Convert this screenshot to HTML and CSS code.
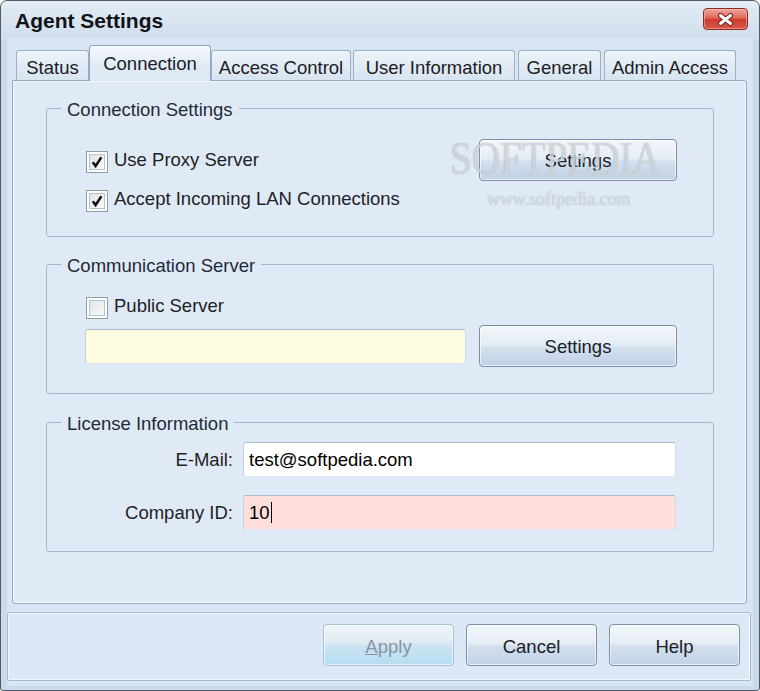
FILE: index.html
```html
<!DOCTYPE html>
<html lang="en">
<head>
<meta charset="utf-8">
<title>Agent Settings</title>
<link rel="stylesheet" href="styles.css">
</head>
<body>
<div class="window">
  <div class="titlebar">
    <span class="title">Agent Settings</span>
    <span class="close" aria-label="Close">
      <svg width="17" height="13" viewBox="0 0 17 13"><path d="M3.5 2.5 L13.5 10.5 M13.5 2.5 L3.5 10.5" stroke="#7a2118" stroke-width="5" stroke-linecap="round" fill="none"/><path d="M3.5 2.5 L13.5 10.5 M13.5 2.5 L3.5 10.5" stroke="#ffffff" stroke-width="3" stroke-linecap="round" fill="none"/></svg>
    </span>
  </div>
  <div class="client">
    <div class="tabs">
      <div class="tab tab-status">Status</div>
      <div class="tab tab-connection active">Connection</div>
      <div class="tab tab-access">Access Control</div>
      <div class="tab tab-user">User Information</div>
      <div class="tab tab-general">General</div>
      <div class="tab tab-admin">Admin Access</div>
    </div>
    <div class="panel">
      <fieldset class="group">
        <legend>Connection Settings</legend>
        <div class="group-body body-connection">
          <div class="checks">
            <div class="check"><span class="box"><svg width="16" height="16" viewBox="0 0 16 16"><path d="M3.2 8.2 L6.4 12.6 L13 2.6" stroke="#111" stroke-width="2.8" fill="none" stroke-linejoin="miter"/></svg></span>Use Proxy Server</div>
            <div class="check"><span class="box"><svg width="16" height="16" viewBox="0 0 16 16"><path d="M3.2 8.2 L6.4 12.6 L13 2.6" stroke="#111" stroke-width="2.8" fill="none" stroke-linejoin="miter"/></svg></span>Accept Incoming LAN Connections</div>
          </div>
          <div class="btn btn-wide">Settings</div>
        </div>
      </fieldset>
      <fieldset class="group group-gap">
        <legend>Communication Server</legend>
        <div class="group-body body-comm">
          <div class="check"><span class="box"></span>Public Server</div>
          <div class="server-row">
            <div class="field field-yellow"></div>
            <div class="btn btn-wide">Settings</div>
          </div>
        </div>
      </fieldset>
      <fieldset class="group group-gap2">
        <legend>License Information</legend>
        <div class="group-body body-license">
          <span class="label">E-Mail:</span>
          <div class="field field-white">test@softpedia.com</div>
          <span class="label">Company ID:</span>
          <div class="field field-pink">10<span class="caret"></span></div>
        </div>
      </fieldset>
    </div>
    <div class="footer">
      <div class="btn btn-footer disabled"><u>A</u>pply</div>
      <div class="btn btn-footer">Cancel</div>
      <div class="btn btn-footer">Help</div>
    </div>
  </div>
  <div class="watermark" aria-hidden="true">
    <span class="wm-big">SOFTPEDIA</span>
    <span class="wm-small">www.softpedia.com</span>
  </div>
</div>
</body>
</html>
```

FILE: styles.css
```css
* { box-sizing: border-box; }
html, body { margin: 0; padding: 0; }
body {
  width: 760px;
  height: 691px;
  overflow: hidden;
  background: #ffffff;
  font-family: "Liberation Sans", Arial, sans-serif;
  font-size: 18.5px;
  color: #1e2226;
}

.window {
  position: relative;
  width: 760px;
  height: 691px;
  border: 1px solid #4f5a66;
  border-radius: 7px 7px 3px 3px;
  background: linear-gradient(#e4ecf5 0px, #d0deed 37px, #cbdaeb 40px, #cbdaeb 100%);
  padding: 0 6px 4px 6px;
  display: flex;
  flex-direction: column;
}

.titlebar {
  height: 37px;
  flex: none;
  display: flex;
  justify-content: space-between;
  align-items: flex-start;
}
.title {
  margin: 8px 0 0 8px;
  font-size: 21px;
  line-height: 24px;
  font-weight: bold;
  color: #101418;
}
.close {
  margin: 7px 5px 0 0;
  width: 45px;
  height: 22px;
  border: 1px solid #8c2d24;
  border-radius: 4px;
  background: linear-gradient(#f0a59b 0%, #e0685c 45%, #cc3c2f 52%, #d9574a 100%);
  box-shadow: inset 0 0 0 1px rgba(255, 200, 190, 0.5);
  display: flex;
  align-items: center;
  justify-content: center;
}

.client {
  flex: 1;
  background: #d8e5f3;
  padding-top: 7px;
  display: flex;
  flex-direction: column;
}

.tabs {
  height: 35px;
  flex: none;
  display: flex;
  align-items: flex-end;
  padding-left: 9px;
  position: relative;
  z-index: 2;
}
.tab {
  height: 30px;
  border: 1px solid #9cb0c6;
  border-bottom: none;
  border-radius: 3px 3px 0 0;
  background: linear-gradient(#edf3f9, #d7e4f1);
  text-align: center;
  line-height: 24px;
  padding-top: 5px;
  color: #1c2024;
  white-space: nowrap;
}
.tab.active {
  height: 36px;
  margin-bottom: -1px;
  padding-top: 6px;
  border-color: #8ea6bf;
  background: linear-gradient(#f6f9fd, #dfeaf6 60%);
}
.tab-status { width: 73px; }
.tab-connection { width: 122px; }
.tab-access { width: 140px; }
.tab-user { width: 162px; margin-left: 2px; }
.tab-general { width: 83px; margin-left: 3px; }
.tab-admin { width: 132px; margin-left: 3px; }

.panel {
  height: 524px;
  flex: none;
  margin: 0 6px 0 5px;
  border: 1px solid #94abc4;
  border-radius: 0 3px 3px 3px;
  background: #dfeaf6;
  box-shadow: inset 0 0 0 1px #f1f6fb;
  padding: 16px 32px 0 33px;
}

.group {
  margin: 0;
  padding: 0;
  min-width: 0;
  border: 1px solid #a3b8cd;
  border-radius: 3px;
}
.group-gap { margin-top: 16px; }
.group-gap2 { margin-top: 17px; }
.group legend {
  margin-left: 14px;
  padding: 4px 6px 0 6px;
  line-height: 18px;
  height: 22px;
  color: #1f2b38;
}

.group-body { display: flex; }
.body-connection {
  justify-content: space-between;
  align-items: flex-start;
  padding: 20px 36px 22px 39px;
}
.checks {
  display: flex;
  flex-direction: column;
  gap: 9px;
  padding-top: 6px;
}
.check {
  height: 30px;
  line-height: 30px;
  display: flex;
  align-items: center;
  gap: 6px;
  white-space: nowrap;
}
.box {
  width: 22px;
  height: 22px;
  margin-top: 4px;
  border: 1px solid #8e9bab;
  background: #ffffff;
  padding: 2px;
  display: flex;
}
.box svg {
  width: 16px;
  height: 16px;
  border: 1px solid #b7c2ce;
  background: linear-gradient(135deg, #dfe4e9, #f9fafb);
}
.box:empty::after {
  content: "";
  flex: 1;
  border: 1px solid #b7c2ce;
  background: linear-gradient(135deg, #dfe4e9, #f9fafb);
}

.body-comm {
  flex-direction: column;
  padding: 16px 36px 26px 39px;
}
.server-row {
  margin-top: 4px;
  display: flex;
  align-items: center;
  justify-content: space-between;
}

.field {
  height: 35px;
  border: 1px solid;
  border-color: #a9bbcd #cfdbe7 #dfe8f1 #c3d1df;
  border-radius: 3px;
  padding: 0 5px;
  line-height: 33px;
  color: #000000;
  white-space: nowrap;
  display: flex;
  align-items: center;
}
.field-yellow {
  width: 381px;
  margin-left: -1px;
  background: #fffde1;
}
.field-white { background: #ffffff; }
.field-pink { background: #ffdedb; }
.caret {
  width: 1px;
  height: 21px;
  background: #000000;
  margin-left: 1px;
}

.body-license {
  display: grid;
  grid-template-columns: 186px 433px;
  grid-template-rows: 35px 35px;
  column-gap: 10px;
  row-gap: 18px;
  align-items: center;
  padding: 9px 0 21px 0;
}
.label {
  text-align: right;
  line-height: 24px;
  color: #1e2226;
}

.btn {
  display: flex;
  align-items: center;
  justify-content: center;
  padding-top: 2px;
  border: 1px solid #7b90a8;
  border-radius: 4px;
  background: linear-gradient(#f2f6fa 0%, #e6edf5 45%, #d2dfed 55%, #c0d2e6 100%);
  box-shadow: inset 0 0 0 1px rgba(255, 255, 255, 0.65);
  color: #1b2129;
  white-space: nowrap;
}
.btn-wide {
  width: 198px;
  height: 42px;
}
.btn-footer {
  width: 131px;
  height: 42px;
  padding-top: 4px;
}
.btn.disabled {
  border-color: #a6c0d6;
  background: linear-gradient(#eef3f8 0%, #e2ebf4 42%, #c9e3f2 55%, #b6ddf2 100%);
  color: #8894a0;
}
.btn.disabled u { text-decoration-thickness: 1px; }

.footer {
  flex: none;
  height: 69px;
  margin: 8px 2px 0 0;
  border: 1px solid #a7bbd0;
  border-radius: 2px;
  background: #dce8f5;
  box-shadow: inset 0 0 0 1px #f3f7fb;
  display: flex;
  justify-content: flex-end;
  align-items: flex-start;
  gap: 12px;
  padding: 11px 10px 0 0;
}

.watermark {
  position: absolute;
  inset: 0;
  pointer-events: none;
  z-index: 5;
}
.wm-big {
  position: absolute;
  left: 449px;
  top: 135px;
  font-family: "Liberation Serif", "Times New Roman", serif;
  font-size: 46px;
  line-height: 46px;
  color: rgba(255, 255, 255, 0.6);
  text-shadow: 0 0 1px rgba(100, 112, 125, 0.7);
  transform: scaleX(0.85);
  transform-origin: left top;
  white-space: nowrap;
}
.wm-small {
  position: absolute;
  left: 486px;
  top: 189px;
  font-family: "Liberation Serif", "Times New Roman", serif;
  font-size: 18px;
  line-height: 18px;
  color: rgba(255, 255, 255, 0.65);
  text-shadow: 0 0 1px rgba(100, 112, 125, 0.7);
  white-space: nowrap;
}
```
